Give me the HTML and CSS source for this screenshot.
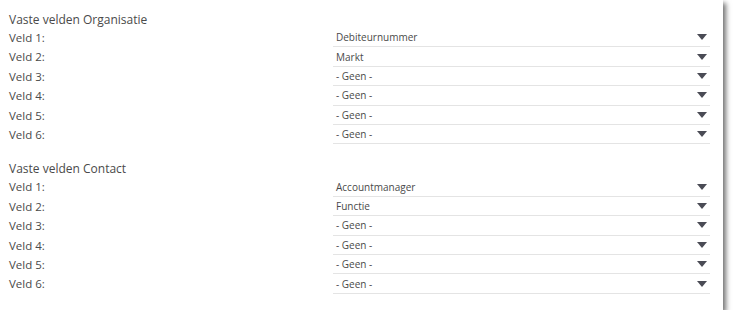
FILE: index.html
```html
<!DOCTYPE html>
<html>
<head>
<meta charset="utf-8">
<link rel="stylesheet" href="styles.css">
</head>
<body>
<div class="card">
  <div class="section">
    <div class="title">Vaste velden Organisatie</div>
    <div class="row"><div class="label">Veld 1:</div><div class="select"><span>Debiteurnummer</span><i class="arrow"></i></div></div>
    <div class="row"><div class="label">Veld 2:</div><div class="select"><span>Markt</span><i class="arrow"></i></div></div>
    <div class="row"><div class="label">Veld 3:</div><div class="select"><span>- Geen -</span><i class="arrow"></i></div></div>
    <div class="row"><div class="label">Veld 4:</div><div class="select"><span>- Geen -</span><i class="arrow"></i></div></div>
    <div class="row"><div class="label">Veld 5:</div><div class="select"><span>- Geen -</span><i class="arrow"></i></div></div>
    <div class="row"><div class="label">Veld 6:</div><div class="select"><span>- Geen -</span><i class="arrow"></i></div></div>
  </div>
  <div class="section second">
    <div class="title">Vaste velden Contact</div>
    <div class="row"><div class="label">Veld 1:</div><div class="select"><span>Accountmanager</span><i class="arrow"></i></div></div>
    <div class="row"><div class="label">Veld 2:</div><div class="select"><span>Functie</span><i class="arrow"></i></div></div>
    <div class="row"><div class="label">Veld 3:</div><div class="select"><span>- Geen -</span><i class="arrow"></i></div></div>
    <div class="row"><div class="label">Veld 4:</div><div class="select"><span>- Geen -</span><i class="arrow"></i></div></div>
    <div class="row"><div class="label">Veld 5:</div><div class="select"><span>- Geen -</span><i class="arrow"></i></div></div>
    <div class="row"><div class="label">Veld 6:</div><div class="select"><span>- Geen -</span><i class="arrow"></i></div></div>
  </div>
</div>
</body>
</html>
```

FILE: styles.css
```css
html, body {
  margin: 0;
  padding: 0;
  background: #ffffff;
}
body {
  font-family: "Open Sans", "Noto Sans", sans-serif;
  color: #4a4a4a;
}
.card {
  box-sizing: content-box;
  width: 701px;
  height: 298px;
  padding: 12px 13px 0 9px;
  background: #fff;
  box-shadow: 3px 3px 5px rgba(0,0,0,0.55);
}
.section.second {
  margin-top: 17px;
}
.title {
  font-size: 12px;
  line-height: 16px;
  color: #4a4a4a;
}
.row {
  display: grid;
  grid-template-columns: 324px 377px;
  height: 19.4px;
  align-items: stretch;
}
.label {
  font-size: 11.5px;
  line-height: 19.4px;
  color: #4a4a4a;
}
.select {
  display: flex;
  align-items: center;
  justify-content: space-between;
  border-bottom: 1px solid #e4e4e4;
  padding: 0 3px 0 3px;
  font-size: 10px;
  color: #4a4a4a;
}
.arrow {
  width: 0;
  height: 0;
  border-left: 5px solid transparent;
  border-right: 5px solid transparent;
  border-top: 6px solid #4a4b55;
}
```
